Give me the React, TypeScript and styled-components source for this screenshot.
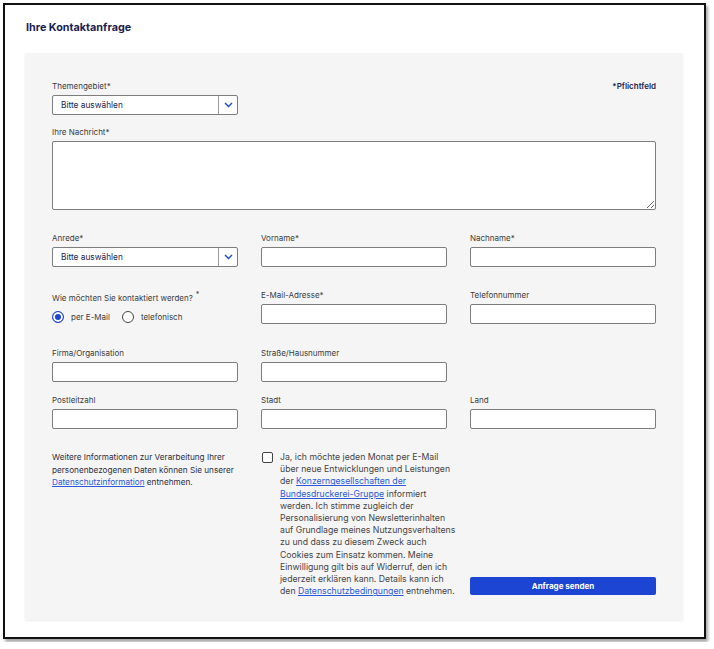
import React from 'react';
import styled, { createGlobalStyle } from 'styled-components';

const GlobalStyle = createGlobalStyle`
  html, body {
    margin: 0;
    padding: 0;
    background: #ffffff;
  }
  body {
    font-family: Inter, "Liberation Sans", Arial, sans-serif;
    color: #3a3a3a;
  }
`;

const Frame = styled.div`
  margin: 3px;
  width: 703px;
  height: 636px;
  box-sizing: border-box;
  border: 2px solid #111;
  box-shadow: 2px 3px 3px rgba(0, 0, 0, 0.35);
  background: #fff;
  padding: 15px 21px 0 20px;
`;

const Title = styled.h2`
  margin: 0 0 17px 1px;
  font-size: 10.8px;
  line-height: 16px;
  font-weight: 700;
  color: #1d1d4f;
`;

const Card = styled.form`
  background: #f5f5f5;
  padding: 28px 27px 23px;
  box-shadow: 0 1px 2px rgba(0, 0, 0, 0.08);
`;

const Row = styled.div<{ $top?: number }>`
  display: grid;
  grid-template-columns: repeat(3, 186px);
  column-gap: 23px;
  margin-top: ${p => p.$top ?? 0}px;
`;

const Field = styled.div<{ $span?: number }>`
  display: flex;
  flex-direction: column;
  grid-column: span ${p => p.$span ?? 1};
`;

const Label = styled.label`
  font-size: 8px;
  line-height: 10px;
  margin-bottom: 4px;
  color: #3b3b3b;
  white-space: nowrap;
`;

const Input = styled.input`
  height: 20px;
  box-sizing: border-box;
  border: 1px solid #7d7d7d;
  border-radius: 2px;
  background: #fff;
  margin: 0;
`;

const TextArea = styled.textarea`
  height: 69px;
  box-sizing: border-box;
  border: 1px solid #7d7d7d;
  border-radius: 2px;
  background: #fff;
  margin: 0;
  resize: vertical;
`;

const Select = styled.div`
  display: flex;
  height: 20px;
  box-sizing: border-box;
  border: 1px solid #7d7d7d;
  border-radius: 2px;
  background: #fff;
`;

const SelectValue = styled.span`
  flex: 1;
  padding-left: 8px;
  font-size: 8.3px;
  line-height: 18px;
  color: #24244f;
`;

const SelectArrow = styled.span`
  width: 18px;
  border-left: 1px solid #9a9a9a;
  display: flex;
  align-items: center;
  justify-content: center;
`;

const Required = styled.div`
  grid-column: 3;
  justify-self: end;
  font-size: 8px;
  line-height: 10px;
  font-weight: 600;
  color: #1d1d4f;
`;

const Sup = styled.sup`
  font-size: 7px;
  margin-left: 3px;
`;

const RadioRow = styled.div`
  display: flex;
  align-items: center;
  gap: 8px;
  margin-top: 4px;
`;

const RadioOption = styled.span`
  display: flex;
  align-items: center;
  gap: 7px;
  font-size: 8px;
  color: #3b3b3b;
  margin-right: 4px;
`;

const RadioDot = styled.span<{ $checked?: boolean }>`
  width: 12px;
  height: 12px;
  box-sizing: border-box;
  border-radius: 50%;
  border: 1px solid ${p => (p.$checked ? '#1c45d4' : '#444')};
  background: ${p => (p.$checked ? '#1c45d4' : '#fff')};
  box-shadow: ${p => (p.$checked ? 'inset 0 0 0 2px #fff' : 'none')};
`;

const Info = styled.p`
  margin: 0;
  font-size: 8.2px;
  line-height: 12.5px;
  color: #2f2f3f;
  white-space: nowrap;
`;

const Consent = styled.div`
  display: flex;
  gap: 7px;
  align-items: flex-start;
`;

const CheckBox = styled.span`
  flex: none;
  width: 11px;
  height: 11px;
  box-sizing: border-box;
  border: 1.5px solid #444;
  border-radius: 2px;
  background: #fff;
  margin: 1px 0 0 1px;
`;

const ConsentText = styled.p`
  margin: 0;
  font-size: 8.7px;
  line-height: 12.2px;
  color: #454545;
  white-space: nowrap;
`;

const Link = styled.a`
  color: #2c5ad8;
  text-decoration: underline;
`;

const SubmitCell = styled.div`
  display: flex;
  align-items: flex-end;
`;

const SubmitButton = styled.button`
  width: 100%;
  height: 18px;
  border: none;
  border-radius: 2px;
  background: #1c45d4;
  color: #fff;
  font-family: inherit;
  font-size: 8px;
  font-weight: 700;
  margin-bottom: 2px;
`;

const Chevron = () => (
  <svg width="9" height="6" viewBox="0 0 9 6">
    <path d="M1 1l3.5 3.5L8 1" fill="none" stroke="#1c45d4" strokeWidth="1.4" />
  </svg>
);

const Dropdown = ({ value }: { value: string }) => (
  <Select>
    <SelectValue>{value}</SelectValue>
    <SelectArrow>
      <Chevron />
    </SelectArrow>
  </Select>
);

const TextField = ({ label }: { label: string }) => (
  <Field>
    <Label>{label}</Label>
    <Input />
  </Field>
);

export default function App() {
  return (
    <>
      <GlobalStyle />
      <Frame>
        <Title>Ihre Kontaktanfrage</Title>
        <Card onSubmit={e => e.preventDefault()}>
          <Row>
            <Field>
              <Label>Themengebiet*</Label>
              <Dropdown value="Bitte auswählen" />
            </Field>
            <Required>*Pflichtfeld</Required>
          </Row>

          <Row $top={12}>
            <Field $span={3}>
              <Label>Ihre Nachricht*</Label>
              <TextArea />
            </Field>
          </Row>

          <Row $top={23}>
            <Field>
              <Label>Anrede*</Label>
              <Dropdown value="Bitte auswählen" />
            </Field>
            <TextField label="Vorname*" />
            <TextField label="Nachname*" />
          </Row>

          <Row $top={23}>
            <Field>
              <Label>
                Wie möchten Sie kontaktiert werden?<Sup>*</Sup>
              </Label>
              <RadioRow>
                <RadioOption>
                  <RadioDot $checked />
                  per E-Mail
                </RadioOption>
                <RadioOption>
                  <RadioDot />
                  telefonisch
                </RadioOption>
              </RadioRow>
            </Field>
            <TextField label="E-Mail-Adresse*" />
            <TextField label="Telefonnummer" />
          </Row>

          <Row $top={24}>
            <TextField label="Firma/Organisation" />
            <TextField label="Straße/Hausnummer" />
          </Row>

          <Row $top={13}>
            <TextField label="Postleitzahl" />
            <TextField label="Stadt" />
            <TextField label="Land" />
          </Row>

          <Row $top={22}>
            <Info>
              Weitere Informationen zur Verarbeitung Ihrer
              <br />
              personenbezogenen Daten können Sie unserer
              <br />
              <Link href="#">Datenschutzinformation</Link> entnehmen.
            </Info>
            <Consent>
              <CheckBox />
              <ConsentText>
                Ja, ich möchte jeden Monat per E-Mail
                <br />
                über neue Entwicklungen und Leistungen
                <br />
                der <Link href="#">Konzerngesellschaften der</Link>
                <br />
                <Link href="#">Bundesdruckerei-Gruppe</Link> informiert
                <br />
                werden. Ich stimme zugleich der
                <br />
                Personalisierung von Newsletterinhalten
                <br />
                auf Grundlage meines Nutzungsverhaltens
                <br />
                zu und dass zu diesem Zweck auch
                <br />
                Cookies zum Einsatz kommen. Meine
                <br />
                Einwilligung gilt bis auf Widerruf, den ich
                <br />
                jederzeit erklären kann. Details kann ich
                <br />
                den <Link href="#">Datenschutzbedingungen</Link> entnehmen.
              </ConsentText>
            </Consent>
            <SubmitCell>
              <SubmitButton type="submit">Anfrage senden</SubmitButton>
            </SubmitCell>
          </Row>
        </Card>
      </Frame>
    </>
  );
}
